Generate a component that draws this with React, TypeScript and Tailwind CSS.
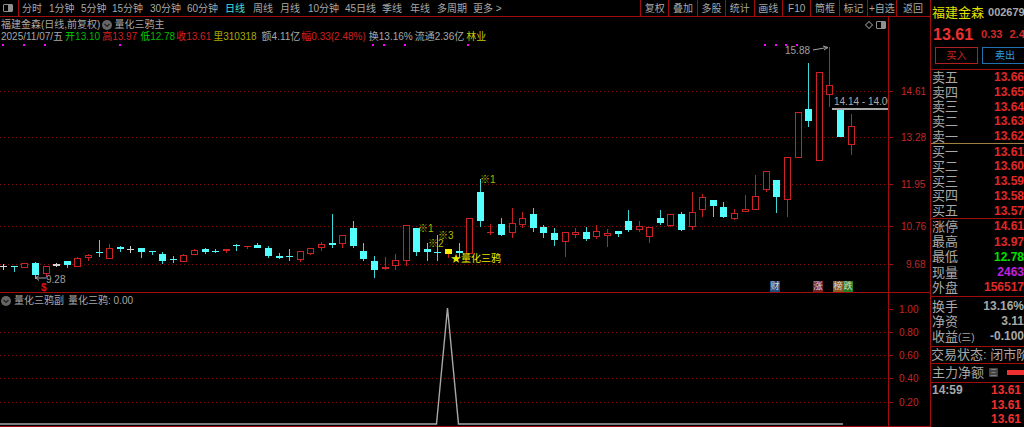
const fontStack = '"Liberation Sans", "Noto Sans CJK SC", sans-serif';

const periods = [
  { label: "分时", w: 27 },
  { label: "1分钟", w: 32 },
  { label: "5分钟", w: 31 },
  { label: "15分钟", w: 38 },
  { label: "30分钟", w: 37 },
  { label: "60分钟", w: 38 },
  { label: "日线", w: 28, active: true },
  { label: "周线", w: 27 },
  { label: "月线", w: 28 },
  { label: "10分钟", w: 37 },
  { label: "45日线", w: 37 },
  { label: "季线", w: 28 },
  { label: "年线", w: 27 },
  { label: "多周期", w: 36 },
  { label: "更多 >", w: 32 },
];

const tools = ["复权", "叠加", "多股", "统计", "画线", "F10", "筒框", "标记", "+自选"];

type Kind = "r" | "c" | "w" | "y" | "rf";

// kind, wickTop, bodyTop, bodyBottom, wickBottom
const candles: [Kind, number, number, number, number][] = [
  ["w", 264, 266, 267, 270],
  ["c", 266, 266, 267, 272],
  ["r", 263, 263, 267, 268],
  ["c", 262, 263, 275, 279],
  ["r", 266, 266, 273, 277],
  ["w", 263, 264, 266, 267],
  ["c", 261, 261, 265, 268],
  ["r", 257, 258, 266, 266],
  ["r", 254, 255, 257, 261],
  ["c", 240, 252, 253, 257],
  ["r", 244, 248, 258, 258],
  ["c", 246, 247, 249, 252],
  ["w", 246, 249, 250, 253],
  ["c", 248, 248, 252, 258],
  ["c", 251, 251, 252, 255],
  ["c", 252, 254, 261, 264],
  ["c", 256, 259, 260, 263],
  ["r", 254, 255, 261, 262],
  ["r", 249, 250, 254, 254],
  ["c", 248, 249, 252, 254],
  ["c", 249, 251, 252, 253],
  ["rf", 249, 249, 251, 253],
  ["c", 244, 245, 246, 251],
  ["rf", 246, 246, 247, 249],
  ["c", 243, 245, 248, 248],
  ["c", 246, 248, 256, 258],
  ["c", 253, 256, 258, 259],
  ["c", 249, 256, 257, 261],
  ["r", 251, 251, 259, 262],
  ["r", 248, 248, 253, 255],
  ["r", 242, 244, 247, 251],
  ["c", 214, 243, 245, 248],
  ["r", 235, 235, 243, 248],
  ["c", 221, 228, 246, 248],
  ["c", 243, 251, 259, 261],
  ["c", 256, 261, 270, 278],
  ["r", 257, 267, 268, 270],
  ["r", 254, 260, 265, 270],
  ["r", 225, 225, 260, 266],
  ["c", 228, 228, 252, 256],
  ["c", 243, 249, 252, 261],
  ["c", 235, 252, 253, 261],
  ["y", 249, 249, 254, 258],
  ["c", 243, 251, 253, 257],
  ["r", 218, 218, 253, 255],
  ["c", 179, 192, 221, 227],
  ["rf", 224, 232, 233, 235],
  ["c", 218, 224, 235, 236],
  ["r", 208, 223, 232, 238],
  ["r", 212, 218, 224, 228],
  ["c", 208, 214, 228, 232],
  ["c", 225, 227, 233, 238],
  ["c", 228, 233, 240, 246],
  ["r", 232, 232, 241, 257],
  ["r", 228, 232, 234, 238],
  ["c", 227, 232, 239, 241],
  ["r", 225, 231, 236, 239],
  ["r", 229, 233, 235, 247],
  ["c", 231, 231, 234, 237],
  ["c", 210, 221, 230, 232],
  ["r", 221, 226, 229, 232],
  ["r", 227, 227, 236, 243],
  ["c", 210, 218, 223, 225],
  ["r", 214, 214, 225, 227],
  ["c", 212, 214, 230, 231],
  ["r", 192, 212, 226, 230],
  ["r", 194, 197, 209, 217],
  ["c", 200, 200, 206, 217],
  ["c", 202, 207, 217, 218],
  ["r", 209, 213, 218, 220],
  ["r", 195, 209, 211, 211],
  ["r", 175, 196, 209, 210],
  ["r", 171, 171, 189, 192],
  ["c", 180, 180, 197, 213],
  ["r", 157, 157, 199, 217],
  ["r", 112, 112, 157, 157],
  ["c", 63, 109, 121, 127],
  ["r", 72, 72, 160, 160],
  ["r", 47, 85, 94, 107],
  ["c", 110, 110, 137, 137],
  ["r", 114, 126, 144, 155],
];

const mainTicks = [
  { y: 91, label: "14.61" },
  { y: 137, label: "13.28" },
  { y: 184, label: "11.95" },
  { y: 226, label: "10.76" },
  { y: 264, label: "9.68" },
];
const subTicks = [
  { y: 309, label: "1.00", grid: false },
  { y: 332, label: "0.80", grid: true },
  { y: 355, label: "0.60", grid: true },
  { y: 378, label: "0.40", grid: true },
  { y: 402, label: "0.20", grid: true },
];
const dotsX = [3, 24, 45, 120, 373, 384, 405, 468, 765, 776, 786, 797];

const quote = [
  { text: "2025/11/07/五", color: "text-[#a8a8a8]", x: 0 },
  { text: "开", color: "text-[#00d000]", x: 2 },
  { text: "13.10", color: "text-[#00b800]" },
  { text: "高", color: "text-[#e02020]", x: 2 },
  { text: "13.97", color: "text-[#d02020]" },
  { text: "低", color: "text-[#00d000]", x: 3 },
  { text: "12.78", color: "text-[#00b800]" },
  { text: "收", color: "text-[#e02020]", x: 1 },
  { text: "13.61", color: "text-[#d02020]" },
  { text: "里", color: "text-[#a8a800]", x: 2 },
  { text: "310318", color: "text-[#a8a800]" },
  { text: "额4.11亿", color: "text-[#a8a8a8]", x: 5 },
  { text: "幅", color: "text-[#e02020]", x: 1 },
  { text: "0.33(2.48%)", color: "text-[#d02020]" },
  { text: "换13.16%", color: "text-[#a8a8a8]", x: 3 },
  { text: "流通2.36亿", color: "text-[#a8a8a8]", x: 2 },
  { text: "林业", color: "text-[#c8c800]", x: 2 },
];

function ChevronDot({ size = 10 }: { size?: number }) {
  return (
    <svg width={size} height={size} viewBox="0 0 10 10" className="shrink-0">
      <circle cx="5" cy="5" r="5" fill="#666" />
      <path d="M2.5 4 L5 6.5 L7.5 4" stroke="#222" strokeWidth="1.2" fill="none" />
    </svg>
  );
}

function Candle({ index, data }: { index: number; data: (typeof candles)[number] }) {
  const [kind, wt, bt, bb, wb] = data;
  const cx = Math.round(3.3 + 10.59 * index) + 0.5;
  const stroke =
    kind === "c" ? "#3fd8d8" : kind === "w" ? "#d0d0d0" : kind === "y" ? "#c02020" : "#c42020";
  const fill =
    kind === "c" ? "#54ffff" : kind === "y" ? "#ffee00" : kind === "rf" ? "#d02020" : kind === "w" ? "#d0d0d0" : "#000";
  const bodyStroke = kind === "r" ? "#cc2222" : "none";
  const flat = bb - bt <= 1;
  return (
    <g shapeRendering="crispEdges">
      <line x1={cx} x2={cx} y1={wt} y2={wb} stroke={stroke} strokeWidth="1" />
      {kind === "r" ? (
        <rect x={cx - 3} y={bt + 0.5} width={6} height={Math.max(bb - bt, 1)} fill={fill} stroke={bodyStroke} strokeWidth="1" />
      ) : flat ? (
        <rect x={cx - 3.5} y={bt} width={7} height={1} fill={kind === "c" ? "#54ffff" : fill} />
      ) : (
        <rect x={cx - 3.5} y={bt} width={7} height={bb - bt} fill={fill} />
      )}
    </g>
  );
}

function Badge({ text, bg }: { text: string; bg: string }) {
  return (
    <span className={`flex h-[11px] w-[10px] items-center justify-center text-[9px] leading-none text-[#d8d8d8] ${bg}`}>
      {text}
    </span>
  );
}

function MainChart() {
  return (
    <div className="flex h-[276px] border-b border-[#a00c0c]">
      <div className="relative w-[889px] border-r border-[#a00c0c]">
        <svg width="888" height="275" viewBox="0 17 888 275" className="block">
          {mainTicks.map((t) => (
            <line key={t.y} x1="0" x2="888" y1={t.y + 0.5} y2={t.y + 0.5} stroke="#8c0c0c" strokeWidth="1" strokeDasharray="1 3" />
          ))}
          {dotsX.map((x) => (
            <rect key={x} x={x - 1} y={44} width={2} height={2} fill="#ff00ff" />
          ))}
          {candles.map((c, i) => (
            <Candle key={i} index={i} data={c} />
          ))}
          <rect x="832" y="108" width="56" height="2" fill="#a8a8a8" />
          <path d="M813 50 L827 47.5 M823 46 L828 47.5 L824 50" stroke="#a0a0a0" strokeWidth="1" fill="none" />
          <path d="M36 278 L46 278 M39 275.5 L36 278 L39 280.5" stroke="#a0a0a0" strokeWidth="1" fill="none" />
          <line x1="36" x2="36" y1="276" y2="279" stroke="#a0a0a0" />
          <g fontFamily={fontStack} fontSize="10">
            <text x="785" y="54" fill="#a0a0a0">15.88</text>
            <text x="46" y="283" fill="#a0a0a0">9.28</text>
            <text x="834" y="105" fill="#a8a8a8">14.14 - 14.00</text>
            <text x="41" y="291" fill="#e01010" fontSize="10" fontWeight="bold">$</text>
            <text x="480" y="183" fill="#b8b800">※1</text>
            <text x="418" y="232" fill="#b8b800">※1</text>
            <text x="428" y="247" fill="#b8b800">※2</text>
            <text x="438" y="239" fill="#b8b800">※3</text>
            <text x="451" y="262" fill="#e8e800">★量化三鸦</text>
          </g>
        </svg>
        <div className="absolute left-0 top-0 text-[10px] leading-[13px]">
          <div className="flex h-[14px] items-center pl-[1px] pt-[1px] text-[#a8a8a8]">
            <span>福建金森(日线,前复权)</span>
            <span className="ml-[2px] mr-[2px]">
              <ChevronDot />
            </span>
            <span>量化三鸦主</span>
          </div>
          <div className="flex h-[11px] items-center whitespace-nowrap pl-[1px]">
            {quote.map((q) => (
              <span key={q.text} className={q.color} style={{ marginLeft: q.x ?? 0 }}>
                {q.text}
              </span>
            ))}
          </div>
        </div>
        <div className="absolute right-[2px] top-[4px] flex items-center gap-[4px]">
          <span className="h-[6px] w-[6px] rotate-45 border border-[#808080]" />
          <span className="flex h-[8px] w-[10px] justify-end rounded-[1px] border border-[#909090]">
            <span className="w-[4px] bg-[#909090]" />
          </span>
        </div>
        <div className="absolute bottom-0 left-[770px] flex">
          <Badge text="财" bg="bg-[#1f4f80]" />
          <span className="w-[33px]" />
          <Badge text="涨" bg="bg-[#7a2020]" />
          <span className="w-[10px]" />
          <Badge text="榜" bg="bg-[#8a5a20]" />
          <Badge text="跌" bg="bg-[#208020]" />
        </div>
      </div>
      <Axis ticks={mainTicks} top={17} height={275} size={10} x={901} />
    </div>
  );
}

function Axis({ ticks, top, height, size, x }: { ticks: { y: number; label: string }[]; top: number; height: number; size: number; x: number }) {
  return (
    <svg width="40" height={height} viewBox={`889 ${top} 40 ${height}`} className="block">
      {ticks.map((t) => (
        <g key={t.y}>
          <line x1="889" x2="893" y1={t.y + 0.5} y2={t.y + 0.5} stroke="#a00c0c" />
          <text x={t.label.length === 4 && size === 10 && top < 100 ? x + 5 : x} y={t.y + 4} fill="#c02828" fontSize={size} fontFamily={fontStack}>
            {t.label}
          </text>
        </g>
      ))}
    </svg>
  );
}

function SubChart() {
  return (
    <div className="flex h-[134px] border-b border-[#a00c0c]">
      <div className="relative w-[889px] border-r border-[#a00c0c]">
        <svg width="888" height="133" viewBox="0 293 888 133" className="block">
          {subTicks
            .filter((t) => t.grid)
            .map((t) => (
              <line key={t.y} x1="0" x2="888" y1={t.y + 0.5} y2={t.y + 0.5} stroke="#8c0c0c" strokeWidth="1" strokeDasharray="1 3" />
            ))}
          <path d="M0 424 L436.5 424 L447.5 308 L458.5 424 L843 424" stroke="#a8a8a8" strokeWidth="1.4" fill="none" />
        </svg>
        <div className="absolute left-[1px] top-[1px] flex h-[13px] items-center text-[10px] text-[#a8a8a8]">
          <ChevronDot />
          <span className="ml-[3px]">量化三鸦副</span>
          <span className="ml-[4px]">量化三鸦: 0.00</span>
        </div>
      </div>
      <Axis ticks={subTicks} top={293} height={133} size={10} x={899} />
    </div>
  );
}

function Toolbar() {
  return (
    <div className="flex h-[17px] items-center border-b border-[#a00c0c] text-[10px] text-[#a8a8a8]">
      <div className="flex h-full w-[19px] items-center border-r border-[#a00c0c] pl-[3px]">
        <span className="flex h-[8px] w-[10px] justify-end rounded-[1px] border border-[#909090]">
          <span className="w-[4px] bg-[#909090]" />
        </span>
      </div>
      <div className="flex w-[621px] pl-[3px]">
        {periods.map((p) => (
          <span
            key={p.label}
            style={{ width: p.w }}
            className={`shrink-0 whitespace-nowrap ${p.active ? "text-[#40e0e0]" : ""}`}
          >
            {p.label}
          </span>
        ))}
      </div>
      {tools.map((t) => (
        <span key={t} className="flex h-full w-[28.4px] items-center justify-center whitespace-nowrap border-l border-[#a00c0c]">
          {t}
        </span>
      ))}
      <span className="flex h-full w-[34px] items-center justify-center border-l border-[#a00c0c]">返回</span>
    </div>
  );
}

function Row({ label, value, color = "text-[#e02828]", h = "h-[14.7px]" }: { label: React.ReactNode; value: string; color?: string; h?: string }) {
  return (
    <div className={`flex items-center justify-between whitespace-nowrap pl-[1px] ${h}`}>
      <span className="text-[13px] leading-none text-[#a8a8a8]">{label}</span>
      <span className={`text-[12px] font-bold leading-none ${color}`}>{value}</span>
    </div>
  );
}

function SidePanel() {
  return (
    <div className="w-[94px] overflow-hidden border-l border-[#a00c0c]">
      <div className="flex h-[23px] items-center whitespace-nowrap pl-[1px] pt-[2px]">
        <span className="text-[13px] text-[#e0e000]">福建金森</span>
        <span className="ml-[4px] text-[11px] font-bold text-[#a8a8a8]">002679</span>
      </div>
      <div className="flex h-[23px] items-center whitespace-nowrap pl-[2px]">
        <span className="text-[16px] font-bold text-[#f03030]">13.61</span>
        <span className="ml-[8px] text-[11px] font-bold text-[#d02828]">0.33</span>
        <span className="ml-[7px] text-[11px] font-bold text-[#d02828]">2.48%</span>
      </div>
      <div className="flex h-[24px] items-start gap-[4px] border-b border-[#a00c0c] pl-[4px] pt-[1px] text-[10px]">
        <span className="flex h-[17px] w-[43px] shrink-0 items-center justify-center border border-[#b02020] text-[#d02020]">买入</span>
        <span className="flex h-[17px] w-[46px] shrink-0 items-center justify-center border border-[#2070b0] text-[#30a0e0]">卖出</span>
      </div>
      <div className="border-b border-[#a08040]">
        <Row label="卖五" value="13.66" />
        <Row label="卖四" value="13.65" />
        <Row label="卖三" value="13.64" />
        <Row label="卖二" value="13.63" />
        <Row label="卖一" value="13.62" />
      </div>
      <div className="border-b border-[#a00c0c]">
        <Row label="买一" value="13.61" />
        <Row label="买二" value="13.60" />
        <Row label="买三" value="13.59" />
        <Row label="买四" value="13.58" />
        <Row label="买五" value="13.57" />
      </div>
      <div className="border-b border-[#a00c0c] pb-[1px]">
        <Row h="h-[15.2px]" label="涨停" value="14.61" />
        <Row h="h-[15.2px]" label="最高" value="13.97" />
        <Row h="h-[15.2px]" label="最低" value="12.78" color="text-[#00e000]" />
        <Row h="h-[15.2px]" label="现量" value="2463" color="text-[#c020e0]" />
        <Row h="h-[15.2px]" label="外盘" value="156517" />
      </div>
      <div className="h-[50px] border-b border-[#a00c0c] pt-[2px]">
        <Row h="h-[15px]" label="换手" value="13.16%" color="text-[#a8a8a8]" />
        <Row h="h-[15px]" label="净资" value="3.11" color="text-[#a8a8a8]" />
        <Row
          h="h-[15px]"
          label={
            <>
              收益<span className="text-[10px]">(三)</span>
            </>
          }
          value="-0.100"
          color="text-[#a8a8a8]"
        />
      </div>
      <div className="flex h-[17px] items-center whitespace-nowrap border-b border-[#a00c0c] text-[13px] text-[#a8a8a8]">
        交易状态: 闭市阶段
      </div>
      <div className="flex h-[19px] items-center whitespace-nowrap border-b border-[#a00c0c] pl-[1px] text-[13px] text-[#a8a8a8]">
        <span>主力净额</span>
        <span className="ml-[5px] flex h-[9px] w-[9px] shrink-0 items-center justify-center rounded-[1px] bg-[#444] text-[7px] leading-none text-[#aaa]">
          三
        </span>
        <span className="ml-[9px] h-[5px] flex-1 bg-[#f03030]" />
      </div>
      <div className="text-[12px] font-bold">
        <div className="flex h-[14.5px] items-center justify-between pl-[1px] pr-[3px]">
          <span className="text-[#a8a8a8]">14:59</span>
          <span className="text-[#f03030]">13.61</span>
        </div>
        <div className="flex h-[14.5px] items-center justify-end pr-[3px] text-[#f03030]">13.61</div>
        <div className="flex h-[14.5px] items-center justify-end pr-[3px] text-[#f03030]">13.61</div>
      </div>
    </div>
  );
}

export default function App() {
  return (
    <div className="flex h-[427px] w-[1024px] overflow-hidden bg-black" style={{ fontFamily: fontStack }}>
      <div className="w-[930px]">
        <Toolbar />
        <MainChart />
        <SubChart />
      </div>
      <SidePanel />
    </div>
  );
}
